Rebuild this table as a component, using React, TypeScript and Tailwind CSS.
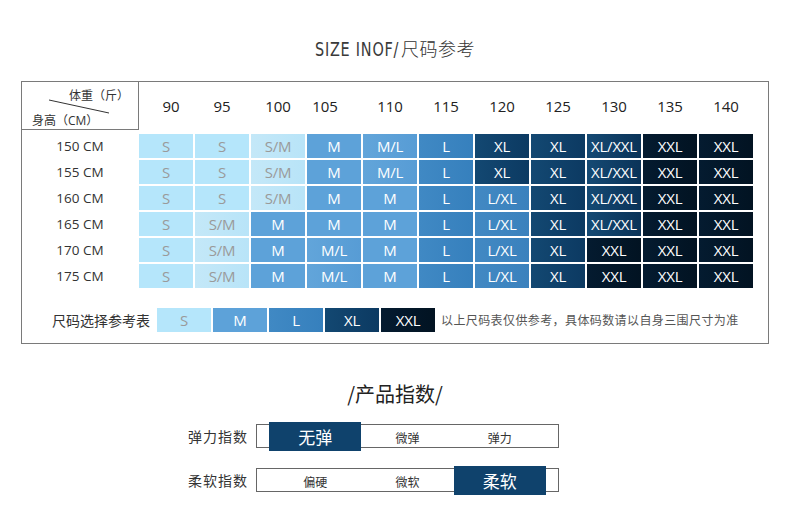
const cols = ["90", "95", "100", "105", "110", "115", "120", "125", "130", "135", "140"]

const rows: [string, string[]][] = [
  ["150 CM", ["S", "S", "S/M", "M", "M/L", "L", "XL", "XL", "XL/XXL", "XXL", "XXL"]],
  ["155 CM", ["S", "S", "S/M", "M", "M/L", "L", "XL", "XL", "XL/XXL", "XXL", "XXL"]],
  ["160 CM", ["S", "S", "S/M", "M", "M", "L", "L/XL", "XL", "XL/XXL", "XXL", "XXL"]],
  ["165 CM", ["S", "S/M", "M", "M", "M", "L", "L/XL", "XL", "XL/XXL", "XXL", "XXL"]],
  ["170 CM", ["S", "S/M", "M", "M/L", "M", "L", "L/XL", "XL", "XXL", "XXL", "XXL"]],
  ["175 CM", ["S", "S/M", "M", "M/L", "M", "L", "L/XL", "XL", "XXL", "XXL", "XXL"]],
]

const tone: Record<string, string> = {
  S: "bg-[#b5e6fb] text-[#9a9a9a]",
  "S/M": "bg-linear-to-r from-[#c4e8f8] to-[#b8e4f8] text-[#9a9a9a]",
  M: "bg-[#5da2d9] text-white",
  "M/L": "bg-linear-to-r from-[#62a5da] to-[#579cd5] text-white",
  L: "bg-linear-to-r from-[#4089c4] to-[#3680bd] text-white",
  "L/XL": "bg-linear-to-r from-[#4289c3] to-[#3a81bd] text-white",
  XL: "bg-linear-to-r from-[#134872] to-[#0c3a62] text-white",
  "XL/XXL": "bg-linear-to-r from-[#154a74] to-[#0a3358] text-white",
  XXL: "bg-linear-to-r from-[#041b30] to-[#021322] text-white",
}

// small nudges so header numbers sit where the reference has them
const colNudge: Record<string, string> = {
  "90": "pl-[10px]",
  "105": "pr-[18px]",
}

const legend = ["S", "M", "L", "XL", "XXL"]

function Cell({ size }: { size: string }) {
  return (
    <div className={`h-[24px] flex items-center justify-center text-[15px] tracking-[-0.2px] ${tone[size]}`}>
      {size}
    </div>
  )
}

function IndexBar({
  label,
  items,
  active,
}: {
  label: string
  items: string[]
  active: number
}) {
  return (
    <div className="flex items-center">
      <div className="w-[86px] pr-[8px] text-right text-[14px] tracking-[1px] text-[#333]">{label}</div>
      <div className="h-[24px] w-[303px] border border-[#666] px-[12px] grid grid-cols-3">
        {items.map((it, i) =>
          i === active ? (
            <div
              key={it}
              className="-my-[3px] h-[29px] bg-[#0f426c] text-white text-[17px] flex items-center justify-center"
            >
              {it}
            </div>
          ) : (
            <div key={it} className="flex items-center justify-center text-[12px] text-[#333] pt-[2px]">
              {it}
            </div>
          )
        )}
      </div>
    </div>
  )
}

export default function App() {
  return (
    <div className="w-[790px] h-[520px] bg-white font-['Open_Sans','Noto_Sans_CJK_SC',sans-serif] text-[#222]">
      <div className="h-[81px] flex items-center justify-center pt-[18px]">
        <h1 className="flex items-baseline text-[#333]">
          <span className="inline-block w-[86px] text-[19px] text-[#3a3a3a] font-['DejaVu_Sans',sans-serif] scale-x-[0.76] origin-left whitespace-nowrap tracking-[1px]">
            SIZE INOF/
          </span>
          <span className="text-[18px] tracking-[0.5px] font-['Noto_Sans_CJK_SC',sans-serif] font-light">尺码参考</span>
        </h1>
      </div>

      <div className="mx-[21px] h-[263px] border border-[#7a7a7a]">
        <div className="flex h-[48px]">
          <div className="relative w-[117px] border-r border-b border-[#7a7a7a] flex flex-col gap-[7px] pt-[5px] text-[12px] text-[#333] leading-[18px]">
            <svg className="absolute inset-0" width="117" height="48">
              <line x1="27" y1="18" x2="87" y2="31" stroke="#333" strokeWidth="1" />
            </svg>
            <div className="text-right pr-[9px]">体重（斤）</div>
            <div className="pl-[10px]">身高（CM）</div>
          </div>
          <div className="grid grid-cols-[repeat(11,54px)] gap-x-[2px]">
            {cols.map((c) => (
              <div key={c} className={`flex items-center justify-center text-[15px] ${colNudge[c] ?? ""}`}>
                {c}
              </div>
            ))}
          </div>
        </div>

        <div className="mt-[4px] flex flex-col gap-[2px]">
          {rows.map(([h, sizes]) => (
            <div key={h} className="flex">
              <div className="w-[117px] flex items-center justify-center text-[13.5px] text-[#333] pr-[1px]">{h}</div>
              <div className="grid grid-cols-[repeat(11,54px)] gap-x-[2px]">
                {sizes.map((s, i) => (
                  <Cell key={i} size={s} />
                ))}
              </div>
            </div>
          ))}
        </div>

        <div className="mt-[20px] flex items-center">
          <div className="w-[135px] pr-[7px] text-right text-[14px] text-[#333] font-['Noto_Sans_CJK_SC',sans-serif]">
            尺码选择参考表
          </div>
          <div className="grid grid-cols-[repeat(5,54px)] gap-x-[2px]">
            {legend.map((s) => (
              <Cell key={s} size={s} />
            ))}
          </div>
          <div className="pl-[6px] text-[12px] tracking-[0.4px] text-[#555] font-['Noto_Sans_CJK_SC',sans-serif]">
            以上尺码表仅供参考，具体码数请以自身三围尺寸为准
          </div>
        </div>
      </div>

      <div className="mt-[35px] flex justify-center">
        <h2 className="text-[20px] text-[#222] font-['Noto_Sans_CJK_SC',sans-serif]">/产品指数/</h2>
      </div>

      <div className="mt-[15px] pl-[170px] flex flex-col gap-[20px] font-['Noto_Sans_CJK_SC',sans-serif]">
        <IndexBar label="弹力指数" items={["无弹", "微弹", "弹力"]} active={0} />
        <IndexBar label="柔软指数" items={["偏硬", "微软", "柔软"]} active={2} />
      </div>
    </div>
  )
}
